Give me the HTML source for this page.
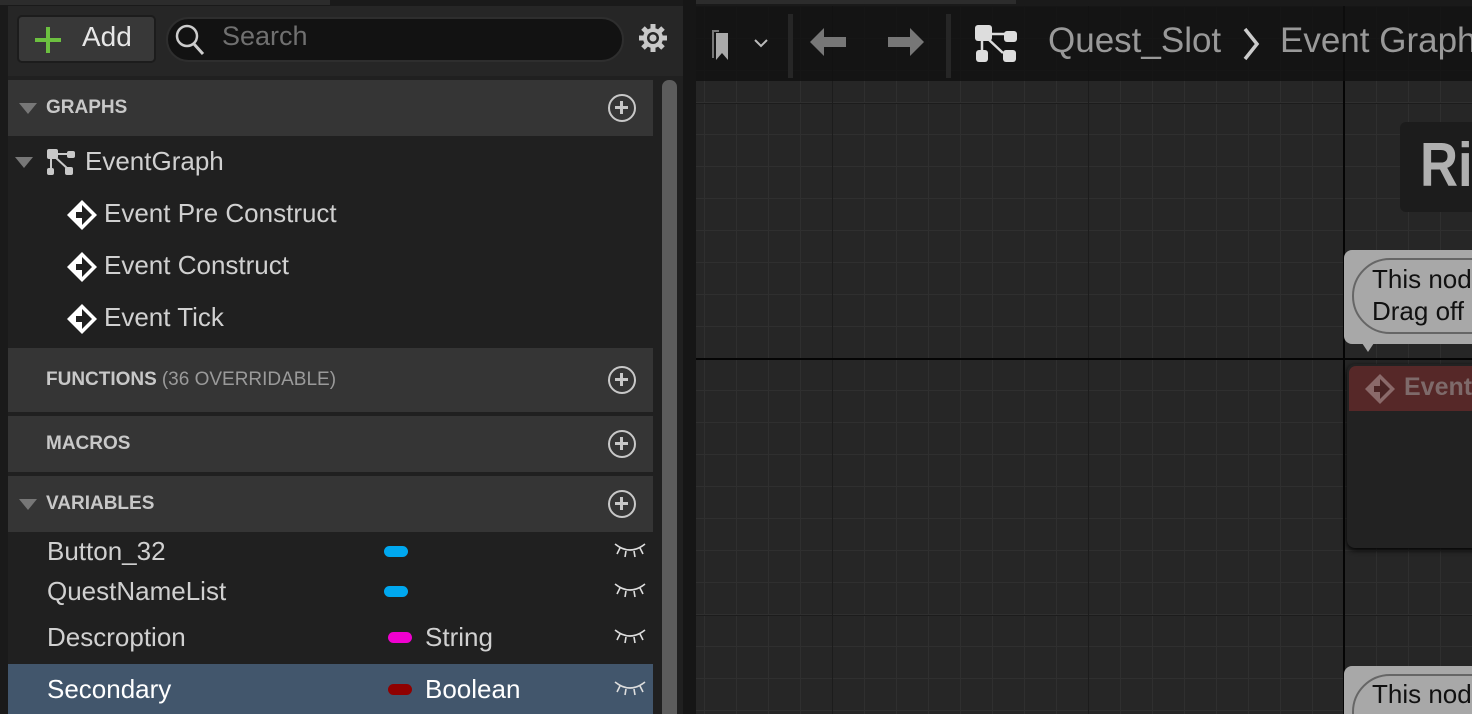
<!DOCTYPE html>
<html style="width:1472px;height:714px;overflow:hidden"><head><meta charset="utf-8"><style>
*{margin:0;padding:0;box-sizing:border-box}
body{width:1472px;height:714px;overflow:hidden;background:#1a1a1a;font-family:"Liberation Sans",sans-serif;position:relative;color:#c8c8c8}
.a{position:absolute}
.hdr{position:absolute;left:8px;width:645px;background:#353535;font-weight:bold;font-size:19px;color:#c8c8c8;display:flex;align-items:center;padding-left:38px}
.plus{position:absolute;right:17px;top:50%;margin-top:-14px;width:28px;height:28px;border:2.5px solid #c8c8c8;border-radius:50%}
.plus:before{content:"";position:absolute;left:5px;top:10px;width:13px;height:3px;background:#c8c8c8}
.plus:after{content:"";position:absolute;left:10px;top:5px;width:3px;height:13px;background:#c8c8c8}
.tri{position:absolute;left:12px;width:0;height:0;border-left:9px solid transparent;border-right:9px solid transparent;border-top:11px solid #777}
.row{position:absolute;font-size:26px;color:#d0d0d0;white-space:nowrap}
.pill{position:absolute;width:24px;height:11px;border-radius:6px}
.eye{position:absolute;left:614px}
</style></head><body>
<div class="a" style="left:0;top:0;width:330px;height:5px;background:#2c2c2c"></div>
<div class="a" style="left:8px;top:6px;width:675px;height:708px;background:#202020"></div>
<div class="a" style="left:8px;top:6px;width:675px;height:70px;background:#262626"></div>
<div class="a" style="left:17px;top:15px;width:139px;height:48px;background:#383838;border:2px solid #1c1c1c;border-radius:5px"></div>
<div class="a" style="left:46px;top:27px;width:4px;height:26px;background:#6cc040"></div>
<div class="a" style="left:35px;top:38px;width:26px;height:4px;background:#6cc040"></div>
<div class="a" style="left:82px;top:21px;font-size:28px;color:#e6e6e6">Add</div>
<div class="a" style="left:166px;top:17px;width:458px;height:45px;background:#121212;border:2px solid #2e2e2e;border-radius:23px"></div>
<svg class="a" style="left:172px;top:22px" width="36" height="36"><circle cx="15" cy="14" r="10" fill="none" stroke="#ccc" stroke-width="2.5"/><line x1="22" y1="22" x2="31" y2="32" stroke="#ccc" stroke-width="3"/></svg>
<div class="a" style="left:222px;top:21px;font-size:27px;color:#707070">Search</div>
<svg class="a" style="left:637px;top:22px" width="32" height="32" viewBox="0 0 32 32"><g fill="#c8c8c8"><circle cx="16" cy="16" r="10"/><g stroke="#c8c8c8" stroke-width="5"><line x1="16" y1="2" x2="16" y2="30"/><line x1="2" y1="16" x2="30" y2="16"/><line x1="6" y1="6" x2="26" y2="26"/><line x1="26" y1="6" x2="6" y2="26"/></g></g><circle cx="16" cy="16" r="6" fill="#262626"/><circle cx="16" cy="16" r="3.5" fill="#c8c8c8"/></svg>

<div class="hdr" style="top:80px;height:56px">GRAPHS<div class="plus"></div></div>
<div class="tri" style="left:19px;top:103px"></div>
<div class="tri" style="left:15px;top:157px"></div>
<svg class="a" style="left:47px;top:149px" width="30" height="27" viewBox="0 0 30 27"><g fill="#c8c8c8"><rect x="0" y="0" width="11" height="10" rx="2"/><rect x="20" y="2" width="8" height="7" rx="2"/><rect x="0" y="19" width="7" height="7" rx="2"/><rect x="18" y="18" width="8" height="8" rx="2"/></g><path d="M4 9v11M10 5h11M8 8l13 12" stroke="#c8c8c8" stroke-width="2" fill="none"/></svg>
<div class="row" style="left:85px;top:146px">EventGraph</div>
<svg class="a" style="left:66px;top:199px" width="32" height="32" viewBox="0 0 32 32"><path d="M16 1L31 16 16 31 1 16Z" fill="#fff"/><path d="M16 6L26 16 16 26 16 19 10 19 10 13 16 13Z" fill="#202020"/></svg>
<div class="row" style="left:104px;top:198px">Event Pre Construct</div>
<svg class="a" style="left:66px;top:251px" width="32" height="32" viewBox="0 0 32 32"><path d="M16 1L31 16 16 31 1 16Z" fill="#fff"/><path d="M16 6L26 16 16 26 16 19 10 19 10 13 16 13Z" fill="#202020"/></svg>
<div class="row" style="left:104px;top:250px">Event Construct</div>
<svg class="a" style="left:66px;top:303px" width="32" height="32" viewBox="0 0 32 32"><path d="M16 1L31 16 16 31 1 16Z" fill="#fff"/><path d="M16 6L26 16 16 26 16 19 10 19 10 13 16 13Z" fill="#202020"/></svg>
<div class="row" style="left:104px;top:302px">Event Tick</div>

<div class="hdr" style="top:348px;height:64px">FUNCTIONS<span style="font-weight:normal;color:#9a9a9a;margin-left:5px">(36 OVERRIDABLE)</span><div class="plus"></div></div>
<div class="hdr" style="top:416px;height:56px">MACROS<div class="plus"></div></div>
<div class="hdr" style="top:476px;height:56px">VARIABLES<div class="plus"></div></div>
<div class="tri" style="left:19px;top:499px"></div>

<div class="row" style="left:47px;top:536px">Button_32</div>
<div class="pill" style="left:384px;top:546px;background:#00a8f0"></div>
<div class="row" style="left:47px;top:576px">QuestNameList</div>
<div class="pill" style="left:384px;top:586px;background:#00a8f0"></div>
<div class="row" style="left:47px;top:622px">Descroption</div>
<div class="pill" style="left:388px;top:632px;background:#f000d0"></div>
<div class="row" style="left:425px;top:622px">String</div>
<div class="a" style="left:8px;top:664px;width:645px;height:50px;background:#42566c"></div>
<div class="row" style="left:47px;top:674px;color:#fff">Secondary</div>
<div class="pill" style="left:388px;top:684px;background:#900000"></div>
<div class="row" style="left:425px;top:674px;color:#fff">Boolean</div>
<svg class="eye" style="top:542px" width="32" height="16"><path d="M1 2Q16 14 31 2M6 6l-3 6M12 9l-1 6M20 9l1 6M26 6l3 6" stroke="#ddd" stroke-width="1.6" fill="none"/></svg>
<svg class="eye" style="top:582px" width="32" height="16"><path d="M1 2Q16 14 31 2M6 6l-3 6M12 9l-1 6M20 9l1 6M26 6l3 6" stroke="#ddd" stroke-width="1.6" fill="none"/></svg>
<svg class="eye" style="top:628px" width="32" height="16"><path d="M1 2Q16 14 31 2M6 6l-3 6M12 9l-1 6M20 9l1 6M26 6l3 6" stroke="#ddd" stroke-width="1.6" fill="none"/></svg>
<svg class="eye" style="top:680px" width="32" height="16"><path d="M1 2Q16 14 31 2M6 6l-3 6M12 9l-1 6M20 9l1 6M26 6l3 6" stroke="#ddd" stroke-width="1.6" fill="none"/></svg>

<div class="a" style="left:656px;top:76px;width:27px;height:638px;background:#202020"></div>
<div class="a" style="left:662px;top:80px;width:15px;height:634px;background:#5c5c5c;border-radius:7px 7px 0 0"></div>
<div class="a" style="left:683px;top:0;width:13px;height:714px;background:#161616"></div>

<div class="a" style="left:696px;top:0;width:776px;height:714px;overflow:hidden;background-color:#262626;
background-image:linear-gradient(90deg,#2f2f2f 1px,transparent 1px),linear-gradient(0deg,#2f2f2f 1px,transparent 1px);
background-size:32px 32px;background-position:8px 7px">
<div class="a" style="left:136px;top:0;width:1px;height:714px;background:#1c1c1c"></div>
<div class="a" style="left:392px;top:0;width:1px;height:714px;background:#1c1c1c"></div>
<div class="a" style="left:0;top:103px;width:776px;height:1px;background:#1c1c1c"></div>
<div class="a" style="left:0;top:615px;width:776px;height:1px;background:#1c1c1c"></div>
<div class="a" style="left:647px;top:0;width:2px;height:714px;background:#050505"></div>
<div class="a" style="left:0;top:358px;width:776px;height:2px;background:#050505"></div>
<div class="a" style="left:0;top:0;width:776px;height:6px;background:#1a1a1a"></div>
<div class="a" style="left:0;top:0;width:320px;height:4px;background:#2c2c2c"></div>
<div class="a" style="left:0;top:6px;width:776px;height:75px;background:rgba(15,15,15,0.78)"></div>

<div class="a" style="left:704px;top:122px;width:90px;height:90px;background:#1c1c1c;border-radius:6px;overflow:hidden"><div style="position:absolute;left:20px;top:8px;font-size:62px;font-weight:bold;color:#b0b0b0;transform:scaleX(.85);transform-origin:left">Ri</div></div>

<div class="a" style="left:648px;top:250px;width:140px;height:94px;background:#a8a8a8;border-radius:8px 0 0 8px"></div>
<div class="a" style="left:656px;top:258px;width:140px;height:76px;border:2px solid #666;border-radius:38px 0 0 38px"></div>
<div class="a" style="left:666px;top:343px;width:0;height:0;border-left:6px solid transparent;border-right:6px solid transparent;border-top:9px solid #a8a8a8"></div>
<div class="a" style="left:676px;top:263px;font-size:26px;color:#111;line-height:32px;white-space:nowrap">This nod<br>Drag off</div>

<div class="a" style="left:651px;top:364px;width:130px;height:184px;background:#222;border-radius:8px 0 0 8px;box-shadow:0 2px 6px #000"></div>
<div class="a" style="left:653px;top:366px;width:130px;height:45px;background:#562828;border-radius:7px 0 0 0"></div>
<svg class="a" style="left:668px;top:373px" width="32" height="32" viewBox="0 0 32 32"><path d="M16 1L31 16 16 31 1 16Z" fill="#8a6a6a"/><path d="M16 6L26 16 16 26 16 19 10 19 10 13 16 13Z" fill="#4a2424"/></svg>
<div class="a" style="left:708px;top:373px;font-size:25px;font-weight:bold;color:#7e6a6a">Event</div>

<div class="a" style="left:648px;top:666px;width:140px;height:60px;background:#a8a8a8;border-radius:8px 0 0 8px"></div>
<div class="a" style="left:656px;top:674px;width:140px;height:60px;border:2px solid #666;border-radius:38px 0 0 0"></div>
<div class="a" style="left:676px;top:679px;font-size:26px;color:#111;white-space:nowrap">This nod</div>
</div>

<svg class="a" style="left:710px;top:28px" width="60" height="34"><path d="M2 2h7v2h-5v26h-2z" fill="#777"/><path d="M6 5h12v27l-6-7-6 7z" fill="#aaa"/><path d="M45 12l6 6 6-6" stroke="#bbb" stroke-width="2" fill="none"/></svg>
<div class="a" style="left:788px;top:14px;width:5px;height:64px;background:#262626"></div>
<div class="a" style="left:946px;top:14px;width:5px;height:64px;background:#262626"></div>
<svg class="a" style="left:808px;top:26px" width="40" height="32"><path d="M2 16L16 2v9h22v10H16v9z" fill="#777"/></svg>
<svg class="a" style="left:886px;top:26px" width="40" height="32"><path d="M38 16L24 2v9H2v10h22v9z" fill="#777"/></svg>
<svg class="a" style="left:974px;top:24px" width="46" height="42" viewBox="0 0 46 42"><g fill="#ddd"><rect x="1" y="1" width="17" height="16" rx="3"/><rect x="30" y="7" width="13" height="11" rx="3"/><rect x="2" y="26" width="12" height="12" rx="3"/><rect x="29" y="26" width="13" height="12" rx="3"/></g><path d="M8 16v12M17 10h14M13 14l16 15" stroke="#ddd" stroke-width="2.5" fill="none"/></svg>
<div class="a" style="left:1048px;top:21px;font-size:35px;color:#999;white-space:nowrap">Quest_Slot</div>
<svg class="a" style="left:1240px;top:26px" width="24" height="36"><path d="M5 3l12 15-12 15" stroke="#ccc" stroke-width="3.5" fill="none"/></svg>
<div class="a" style="left:1280px;top:21px;font-size:35px;color:#999;white-space:nowrap">Event Graph</div>
</body></html>
